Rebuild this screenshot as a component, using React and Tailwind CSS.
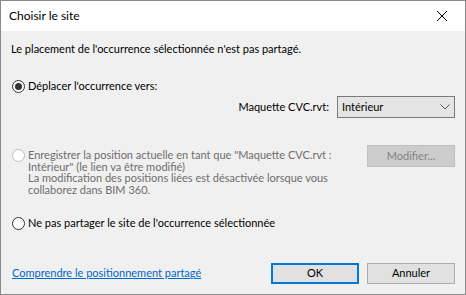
import { useState } from "react"

const Radio = ({ checked, disabled }) => (
    <span className={`flex items-center justify-center w-[13px] h-[13px] rounded-full border shrink-0 bg-white ${disabled ? "border-[#bcbcbc]" : "border-[#333333]"}`}>
        {checked && <span className="w-[7px] h-[7px] rounded-full bg-[#333333]" />}
    </span>
)

const App = () => {
    const [choice, setChoice] = useState("move")
    return (
        <div className="w-[466px] h-[295px] flex flex-col border border-[#8a8a8a] bg-[#f0f0f0] text-[11px] text-black overflow-hidden" style={{ fontFamily: 'Lato, "Segoe UI", sans-serif' }}>
            <div className="h-[30px] bg-white flex items-center justify-between shrink-0">
                <span className="pl-[8px] text-[12px]">Choisir le site</span>
                <svg width="46" height="30" viewBox="0 0 46 30" className="shrink-0">
                    <path d="M18 10 L28 20 M28 10 L18 20" stroke="#000" strokeWidth="1" />
                </svg>
            </div>
            <div className="flex flex-col flex-1 px-[10px]">
                <p className="mt-[10px] leading-[16px]">Le placement de l'occurrence sélectionnée n'est pas partagé.</p>
                <label className="mt-[21px] flex items-center gap-[3px] leading-[16px] pl-[1px]" onClick={() => setChoice("move")}>
                    <Radio checked={choice === "move"} />
                    <span>Déplacer l'occurrence vers:</span>
                </label>
                <div className="mt-[2px] flex items-center justify-end gap-[8px]">
                    <span>Maquette CVC.rvt:</span>
                    <div className="w-[118px] h-[22px] border border-[#7a7a7a] bg-[#e5e5e5] flex items-center justify-between px-[4px]">
                        <span>Intérieur</span>
                        <svg width="10" height="6" viewBox="0 0 10 6">
                            <path d="M0.5 0.5 L5 5 L9.5 0.5" fill="none" stroke="#555" strokeWidth="1" />
                        </svg>
                    </div>
                </div>
                <div className="mt-[27px] flex justify-between items-start">
                    <div className="flex items-start gap-[3px] pl-[1px] text-[#6d6d6d]">
                        <span className="mt-[4px]"><Radio disabled /></span>
                        <p className="leading-[11.5px] whitespace-nowrap pt-[4px]">
                            Enregistrer la position actuelle en tant que "Maquette CVC.rvt :<br />
                            Intérieur" (le lien va être modifié)<br />
                            La modification des positions liées est désactivée lorsque vous<br />
                            collaborez dans BIM 360.
                        </p>
                    </div>
                    <button disabled className="w-[88px] h-[22px] border border-[#bfbfbf] bg-[#cccccc] text-[#838383]">Modifier...</button>
                </div>
                <label className="mt-[20px] flex items-center gap-[3px] leading-[16px] pl-[1px]" onClick={() => setChoice("none")}>
                    <Radio checked={choice === "none"} />
                    <span>Ne pas partager le site de l'occurrence sélectionnée</span>
                </label>
                <div className="mt-auto mb-[10px] flex items-center justify-between">
                    <a href="#" className="text-[#0066cc] underline pl-[1px]">Comprendre le positionnement partagé</a>
                    <div className="flex gap-[8px]">
                        <button className="w-[88px] h-[21px] border-2 border-[#0078d7] bg-[#e1e1e1]">OK</button>
                        <button className="w-[88px] h-[21px] border border-[#adadad] bg-[#e1e1e1]">Annuler</button>
                    </div>
                </div>
            </div>
        </div>
    )
}

export default App
